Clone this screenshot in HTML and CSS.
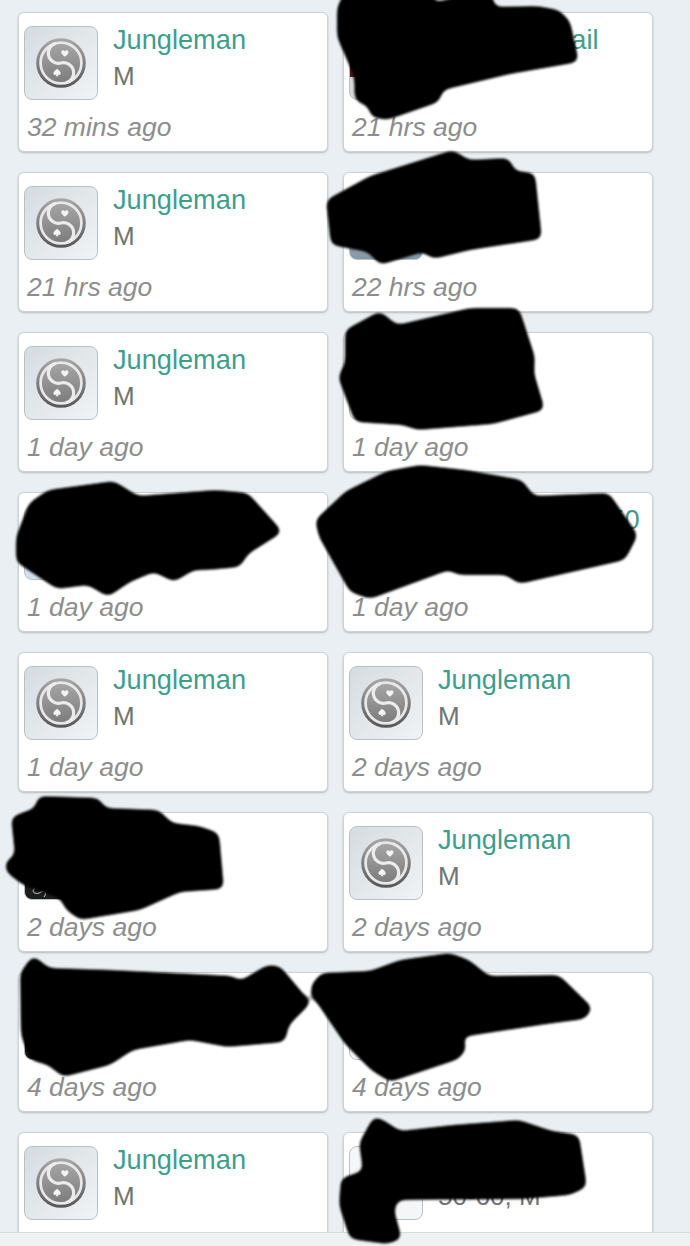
FILE: index.html
```html
<!DOCTYPE html>
<html lang="en">
<head>
    <meta charset="UTF-8">
    <meta name="viewport" content="width=device-width, initial-scale=1.0">
    <title>Profile views</title>
    <link rel="stylesheet" href="styles.css">
</head>
<body>
    <svg class="defs" width="0" height="0">
        <defs>
            <linearGradient id="ring" x1="0" y1="0" x2="0" y2="1">
                <stop offset="0" stop-color="#a8a8a8"/>
                <stop offset="1" stop-color="#565656"/>
            </linearGradient>
            <linearGradient id="disc" x1="0" y1="0" x2="0" y2="1">
                <stop offset="0" stop-color="#a6a6a6"/>
                <stop offset="1" stop-color="#7c7c7c"/>
            </linearGradient>
            <symbol id="yinyang" viewBox="0 0 74 74">
                <circle cx="37" cy="37" r="25.5" fill="url(#ring)"/>
                <circle cx="37" cy="37" r="21" fill="url(#disc)" stroke="#e8e8e8" stroke-width="2.8"/>
                <path d="M37 16 A10.5 10.5 0 0 0 37 37 A10.5 10.5 0 0 1 37 58" transform="rotate(-14 37 37)" fill="none" stroke="#ececec" stroke-width="3.2"/>
                <path d="M41 30.5 C37.5 28 37 26.5 37.5 25 C38.2 23.6 40.2 23.6 41 25.2 C41.8 23.6 43.8 23.6 44.5 25 C45 26.5 44.5 28 41 30.5 Z" fill="#f4f4f4"/>
                <path d="M33 43 C36.5 45.8 37 47.2 36.5 48.5 C35.9 49.6 34.4 49.6 33.6 48.6 L34.4 50.6 L31.6 50.6 L32.4 48.6 C31.6 49.6 30.1 49.6 29.5 48.5 C29 47.2 29.5 45.8 33 43 Z" fill="#f4f4f4"/>
            </symbol>
        </defs>
    </svg>

    <div class="list">
        <div class="card">
            <div class="info">
                <div class="avatar"><svg><use href="#yinyang"/></svg></div>
                <div class="text"><div class="name">Jungleman</div><div class="meta">M</div></div>
            </div>
            <div class="time">32 mins ago</div>
        </div>
        <div class="card">
            <div class="info">
                <div class="avatar avatar-red"></div>
                <div class="text"><div class="name">••••••••••••••ail</div><div class="meta">M</div></div>
            </div>
            <div class="time">21 hrs ago</div>
        </div>

        <div class="card">
            <div class="info">
                <div class="avatar"><svg><use href="#yinyang"/></svg></div>
                <div class="text"><div class="name">Jungleman</div><div class="meta">M</div></div>
            </div>
            <div class="time">21 hrs ago</div>
        </div>
        <div class="card">
            <div class="info">
                <div class="avatar avatar-blue"></div>
                <div class="text"><div class="name">••••••</div><div class="meta">M</div></div>
            </div>
            <div class="time">22 hrs ago</div>
        </div>

        <div class="card">
            <div class="info">
                <div class="avatar"><svg><use href="#yinyang"/></svg></div>
                <div class="text"><div class="name">Jungleman</div><div class="meta">M</div></div>
            </div>
            <div class="time">1 day ago</div>
        </div>
        <div class="card">
            <div class="info">
                <div class="avatar avatar-plain"></div>
                <div class="text"><div class="name">••••••</div><div class="meta">M</div></div>
            </div>
            <div class="time">1 day ago</div>
        </div>

        <div class="card">
            <div class="info">
                <div class="avatar avatar-pale"></div>
                <div class="text"><div class="name">••••••</div><div class="meta">M</div></div>
            </div>
            <div class="time">1 day ago</div>
        </div>
        <div class="card">
            <div class="info">
                <div class="avatar avatar-plain"></div>
                <div class="text"><div class="name">••••••••••••••••••50</div><div class="meta">M</div></div>
            </div>
            <div class="time">1 day ago</div>
        </div>

        <div class="card">
            <div class="info">
                <div class="avatar"><svg><use href="#yinyang"/></svg></div>
                <div class="text"><div class="name">Jungleman</div><div class="meta">M</div></div>
            </div>
            <div class="time">1 day ago</div>
        </div>
        <div class="card">
            <div class="info">
                <div class="avatar"><svg><use href="#yinyang"/></svg></div>
                <div class="text"><div class="name">Jungleman</div><div class="meta">M</div></div>
            </div>
            <div class="time">2 days ago</div>
        </div>

        <div class="card">
            <div class="info">
                <div class="avatar avatar-dark">
                    <svg viewBox="0 0 72 72"><path d="M3 58 C8 54 12 58 9 62 C6 66 12 68 16 65 C20 62 22 67 19 70" fill="none" stroke="#ddd" stroke-width="1"/></svg>
                </div>
                <div class="text"><div class="name">••••••</div><div class="meta">M</div></div>
            </div>
            <div class="time">2 days ago</div>
        </div>
        <div class="card">
            <div class="info">
                <div class="avatar"><svg><use href="#yinyang"/></svg></div>
                <div class="text"><div class="name">Jungleman</div><div class="meta">M</div></div>
            </div>
            <div class="time">2 days ago</div>
        </div>

        <div class="card">
            <div class="info">
                <div class="avatar avatar-dark"></div>
                <div class="text"><div class="name">••••••</div><div class="meta">M</div></div>
            </div>
            <div class="time">4 days ago</div>
        </div>
        <div class="card">
            <div class="info">
                <div class="avatar avatar-plain"></div>
                <div class="text"><div class="name">•••••••••••••••</div><div class="meta">M</div></div>
            </div>
            <div class="time">4 days ago</div>
        </div>

        <div class="card">
            <div class="info">
                <div class="avatar"><svg><use href="#yinyang"/></svg></div>
                <div class="text"><div class="name">Jungleman</div><div class="meta">M</div></div>
            </div>
        </div>
        <div class="card">
            <div class="info">
                <div class="avatar avatar-plain"></div>
                <div class="text"><div class="name">••••••</div><div class="meta">50-60, M</div></div>
            </div>
        </div>
    </div>
    <div class="footer"></div>

    <!-- black marker scribbles drawn over the screenshot -->
    <svg class="scribbles" width="690" height="1246" viewBox="0 0 690 1246">
        <defs>
            <filter id="soft" filterUnits="userSpaceOnUse" x="-20" y="-20" width="730" height="1286">
                <feGaussianBlur stdDeviation="4"/>
                <feColorMatrix values="0 0 0 0 0  0 0 0 0 0  0 0 0 0 0  0 0 0 7 -3"/>
                <feGaussianBlur stdDeviation="0.9"/>
            </filter>
        </defs>
        <g filter="url(#soft)" fill="#000">
            <polygon points="337,7 347,-12 433,-12 433,3 490,-12 495,7 537,6 559,10 570,21 579,62 510,74 443,90 439,102 387,120 371,117 368,106 355,101 354,76 337,37"/>
            <polygon points="326,200 370,176 453,150 469,160 509,158 515,171 535,173 542,239 470,250 433,259 423,252 380,265 368,252 331,245"/>
            <polygon points="345,330 380,311 397,325 470,308 519,308 535,357 534,373 545,410 493,424 417,430 403,425 355,422 338,377 345,363"/>
            <polygon points="29,503 48,490 114,481 138,496 216,490 248,493 283,532 248,554 240,567 207,570 194,570 174,582 154,572 130,582 108,597 88,585 57,589 16,562 16,537"/>
            <polygon points="315,520 346,491 387,471 420,465 466,470 522,480 534,496 609,493 638,535 625,560 519,584 506,575 458,575 449,570 370,599 350,592 319,537"/>
            <polygon points="11,817 35,808 38,796 99,798 105,808 159,810 172,823 199,826 219,833 224,889 180,892 140,910 80,920 65,909 61,899 23,885 6,872 5,862 15,855"/>
            <polygon points="20,973 33,955 49,968 110,970 233,976 240,981 267,965 280,966 311,1003 289,1025 285,1042 227,1047 190,1040 133,1050 110,1065 63,1077 48,1065 30,1060 21,1035"/>
            <polygon points="311,985 321,973 370,971 400,960 450,953 469,960 489,976 559,975 593,1008 585,1019 547,1024 462,1037 467,1048 459,1059 390,1082 371,1070 345,1044 311,994"/>
            <polygon points="359,1143 374,1116 385,1121 400,1131 453,1125 519,1120 552,1131 579,1135 587,1187 570,1195 524,1199 398,1200 394,1210 402,1239 387,1244 350,1239 339,1205 341,1178 363,1171"/>
        </g>
    </svg>
</body>
</html>
```

FILE: styles.css
```css
/* page */
body {
    margin: 0;
    width: 690px;
    height: 1246px;
    overflow: hidden;
    position: relative;
    font-family: "Liberation Sans", Arial, sans-serif;
    background-color: #e9eff2;
}
.defs {
    display: block;
}

/* card grid */
.list {
    height: 1232px;
    overflow: hidden;
    box-sizing: border-box;
    padding: 12px 0 0 18px;
    display: grid;
    grid-template-columns: 310px 310px;
    grid-auto-rows: 140px;
    column-gap: 15px;
    row-gap: 20px;
}
.card {
    box-sizing: border-box;
    padding: 13px 5px 0;
    background: #fff;
    border: 1px solid #ccd2d5;
    border-radius: 6px;
    box-shadow: 0 1px 2px rgba(0, 0, 0, 0.22);
}
.info {
    display: flex;
    gap: 15px;
}

/* avatars */
.avatar {
    box-sizing: border-box;
    width: 74px;
    height: 74px;
    flex: none;
    border: 1px solid #b7c0c4;
    border-radius: 8px;
    background: linear-gradient(135deg, #d5dce0, #f1f3f5);
    overflow: hidden;
}
.avatar svg {
    display: block;
    width: 72px;
    height: 72px;
}
.avatar-red {
    background: linear-gradient(#5a1414 70%, #d9d9d9 70%);
}
.avatar-blue {
    background: linear-gradient(#c2ccd2, #8497a5);
}
.avatar-pale {
    background: #d3e0ee;
}
.avatar-dark {
    background: #1c1c1c;
}
.avatar-plain {
    background: #f4f6f7;
}

/* text */
.text {
    min-width: 0;
}
.name {
    font-size: 27.2px;
    line-height: 31px;
    margin-top: -2px;
    color: #3f9e8b;
    white-space: nowrap;
}
.meta {
    font-size: 26px;
    line-height: 30px;
    margin-top: 6px;
    color: #737373;
}
.time {
    margin: 12px 0 0 3px;
    font-size: 26.5px;
    line-height: 30px;
    font-style: italic;
    color: #8d8d8d;
}

/* bottom strip */
.footer {
    box-sizing: border-box;
    height: 14px;
    border-top: 1px solid #d6dbdc;
    background: #eef2f3;
}
.scribbles {
    position: absolute;
    left: 0;
    top: 0;
}
```
